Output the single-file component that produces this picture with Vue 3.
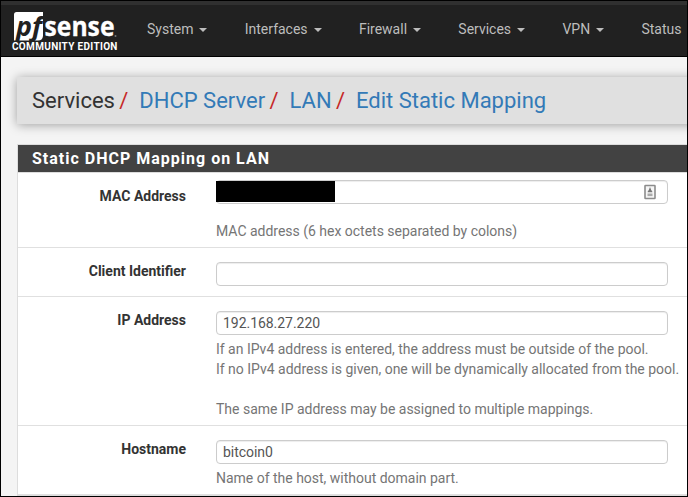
<script setup>
const menus = [
  { label: 'System', caret: true },
  { label: 'Interfaces', caret: true },
  { label: 'Firewall', caret: true },
  { label: 'Services', caret: true },
  { label: 'VPN', caret: true },
  { label: 'Status', caret: false },
]
const crumbs = ['DHCP Server', 'LAN', 'Edit Static Mapping']
const fields = [
  { label: 'MAC Address', value: '', kind: 'mac', help: ['MAC address (6 hex octets separated by colons)'] },
  { label: 'Client Identifier', value: '', kind: 'client', help: [] },
  {
    label: 'IP Address', value: '192.168.27.220', kind: 'ip',
    help: [
      'If an IPv4 address is entered, the address must be outside of the pool.',
      'If no IPv4 address is given, one will be dynamically allocated from the pool.',
      '',
      'The same IP address may be assigned to multiple mappings.',
    ],
  },
  { label: 'Hostname', value: 'bitcoin0', kind: 'host', help: ['Name of the host, without domain part.'] },
]
</script>

<template>
  <div class="page">
    <nav class="navbar">
      <div class="brand">
        <svg class="logo" width="106" height="30" viewBox="0 0 106 30">
          <path d="M4.5 1H31V25Q30.500 29.500 26 29.500H2V3.500Q2 1 4.500 1Z" fill="#fff" />
          <text class="pf" x="4" y="24.500" textLength="26" lengthAdjust="spacingAndGlyphs">pf</text>
          <text class="sense" x="32.500" y="25" textLength="70" lengthAdjust="spacingAndGlyphs">sense</text>
          <circle cx="103.500" cy="25" r="1" fill="#777" />
        </svg>
        <span class="edition">COMMUNITY EDITION</span>
      </div>
      <ul class="menu">
        <li v-for="m in menus" :key="m.label">
          <span>{{ m.label }}</span><i v-if="m.caret" class="caret"></i>
        </li>
      </ul>
    </nav>

    <header class="crumbs">
      <span class="root">Services</span>
      <template v-for="c in crumbs" :key="c">
        <span class="slash">/</span><a>{{ c }}</a>
      </template>
    </header>

    <section class="panel">
      <h2>Static DHCP Mapping on LAN</h2>
      <div v-for="f in fields" :key="f.label" class="row" :class="f.kind">
        <label>{{ f.label }}</label>
        <div class="control">
          <div class="input">
            <span v-if="f.kind === 'mac'" class="redacted"></span>
            <span class="value">{{ f.value }}</span>
            <svg v-if="f.kind === 'mac'" class="contact" width="12" height="16" viewBox="0 0 12 16">
              <rect x="1" y="1.5" width="10" height="13" rx="0.5" fill="#f6f6f6" stroke="#8c8c8c" stroke-width="1.6" />
              <path d="M6 3L7.2 6L8.3 7.6V8.3H3.7V7.6L4.8 6Z" fill="#777" />
              <rect x="3.5" y="9.5" width="5" height="2.6" fill="#aaa" />
            </svg>
          </div>
          <p v-for="(line, i) in f.help" :key="i">{{ line }}</p>
        </div>
      </div>
    </section>
  </div>
</template>

<style>
body {
  margin: 0;
  overflow: hidden;
}
</style>

<style scoped>
.page {
  box-sizing: border-box;
  width: 688px;
  height: 497px;
  overflow: hidden;
  border: 1px solid #000;
  background: #f4f4f4;
  font-family: Roboto, "Liberation Sans", sans-serif;
  font-size: 14px;
  line-height: 20px;
}
.navbar {
  box-sizing: border-box;
  display: flex;
  height: 56px;
  border-top: 4px solid #303030;
  border-bottom: 1px solid #000;
  background: #212121;
}
.brand {
  display: flex;
  flex-direction: column;
  flex: none;
  width: 134px;
  padding: 6px 0 0 11px;
}
.logo {
  display: block;
  overflow: visible;
}
.pf {
  font: italic 700 27px "Open Sans", sans-serif;
  fill: #212121;
}
.sense {
  font: 700 27px "Open Sans", sans-serif;
  fill: #fff;
  stroke: #fff;
  stroke-width: 0.3px;
}
.edition {
  height: 12px;
  color: #fff;
  font-size: 10px;
  font-weight: 700;
  line-height: 12px;
  letter-spacing: 0.32px;
  white-space: nowrap;
}
.menu {
  display: flex;
  gap: 37.3px;
  margin: 0;
  padding: 14px 0 0 1px;
  list-style: none;
  color: #bdbdbd;
}
.menu li {
  display: flex;
  align-items: center;
  height: 20px;
}
.caret {
  margin-left: 6px;
  margin-top: 2px;
  border: 4px solid transparent;
  border-top-color: #bdbdbd;
  border-bottom: 0;
}
.crumbs {
  box-sizing: border-box;
  display: flex;
  align-items: center;
  height: 47px;
  margin: 20px -10px 0 16px;
  padding-left: 15px;
  background: #e0e0e0;
  box-shadow: 0 1px 10px rgba(0, 0, 0, 0.35);
  color: #333;
  font-size: 22px;
  white-space: nowrap;
}
.slash {
  margin: 0 11px 0 4.3px;
  color: #c62828;
}
.crumbs a {
  color: #337ab7;
}
.panel {
  margin: 20px -10px 0 16px;
  border: 1px solid #ddd;
  background: #fff;
}
h2 {
  box-sizing: border-box;
  height: 28px;
  margin: 0;
  padding: 4px 0 0 14px;
  border-bottom: 1px solid #ddd;
  background: #424242;
  color: #fff;
  font-size: 16px;
  font-weight: 700;
  line-height: 20px;
  letter-spacing: 1px;
}
.row {
  box-sizing: border-box;
  display: flex;
  padding-top: 14px;
  border-bottom: 1px solid #e0e0e0;
}
.row.mac {
  height: 75px;
  padding-top: 7px;
}
.row.client {
  height: 49px;
}
.row.ip {
  height: 129px;
}
.row.host {
  height: 69px;
}
label {
  width: 168px;
  margin-right: 30px;
  margin-top: -1px;
  color: #333;
  font-weight: 700;
  text-align: right;
}
.mac label {
  margin-top: 6px;
}
.input {
  box-sizing: border-box;
  display: flex;
  align-items: center;
  width: 452px;
  height: 24px;
  margin-bottom: 4px;
  padding-left: 6px;
  border: 1px solid #ccc;
  border-radius: 4px;
  box-shadow: inset 0 1px 1px rgba(0, 0, 0, 0.075);
  color: #555;
}
.value {
  letter-spacing: -0.04px;
}
.mac .input {
  margin-bottom: 17px;
  padding-left: 0;
}
.redacted {
  width: 119px;
  height: 21px;
  margin: -1px 0 0 -1px;
  background: #000;
}
.contact {
  margin-left: auto;
  margin-right: 11px;
}
p {
  height: 20px;
  margin: 0;
  color: #757575;
  letter-spacing: -0.012px;
  white-space: nowrap;
}
</style>
